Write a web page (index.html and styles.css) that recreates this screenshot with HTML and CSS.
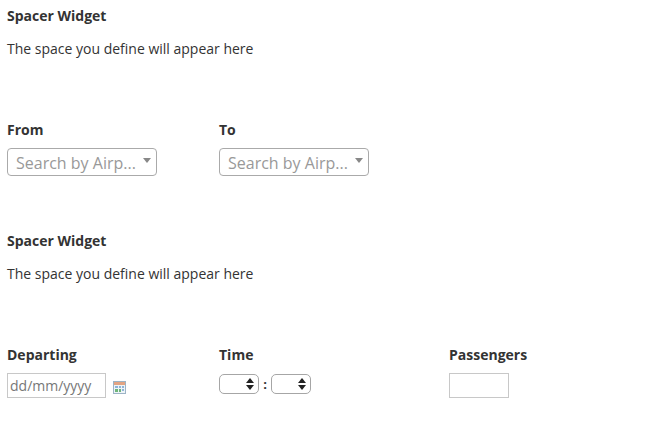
FILE: index.html
```html
<!DOCTYPE html>
<html lang="en">
<head>
    <meta charset="UTF-8">
    <title>Flight Search</title>
    <link rel="stylesheet" href="styles.css">
</head>
<body>
    <div class="spacer-widget">
        <div class="spacer-title">Spacer Widget</div>
        <div class="spacer-text">The space you define will appear here</div>
    </div>

    <div class="field-row">
        <div class="field col-first">
            <div class="field-label">From</div>
            <div class="airport-select">
                <span class="airport-text">Search by Airp...</span>
                <span class="caret"></span>
            </div>
        </div>
        <div class="field">
            <div class="field-label">To</div>
            <div class="airport-select">
                <span class="airport-text">Search by Airp...</span>
                <span class="caret"></span>
            </div>
        </div>
    </div>

    <div class="spacer-widget">
        <div class="spacer-title">Spacer Widget</div>
        <div class="spacer-text">The space you define will appear here</div>
    </div>

    <div class="field-row">
        <div class="field col-first">
            <div class="field-label">Departing</div>
            <div class="date-wrap">
                <div class="date-input">dd/mm/yyyy</div>
                <svg class="calendar" width="13" height="13" viewBox="0 0 13 13">
                    <rect x="0.5" y="0.5" width="12" height="12" fill="#eef4f8" stroke="#9db4c6"/>
                    <rect x="1" y="1" width="11" height="3" fill="#e3a483"/>
                    <rect x="2" y="5" width="3" height="2" fill="#8fb4d8"/>
                    <rect x="6" y="5" width="2" height="2" fill="#8fb4d8"/>
                    <rect x="9" y="5" width="2" height="2" fill="#8fb4d8"/>
                    <rect x="2" y="8" width="3" height="3" fill="#6fb57a"/>
                    <rect x="6" y="8" width="2" height="3" fill="#6fb57a"/>
                    <rect x="9" y="8" width="2" height="2" fill="#8fb4d8"/>
                </svg>
            </div>
        </div>
        <div class="field col-time">
            <div class="field-label">Time</div>
            <div class="time-wrap">
                <div class="time-select"><span class="updown"></span></div>
                <span class="time-sep">:</span>
                <div class="time-select"><span class="updown"></span></div>
            </div>
        </div>
        <div class="field">
            <div class="field-label">Passengers</div>
            <div class="pax-input"></div>
        </div>
    </div>
</body>
</html>
```

FILE: styles.css
```css
* {
    margin: 0;
    padding: 0;
    box-sizing: border-box;
    font-family: "Open Sans", Arial, sans-serif;
}

body {
    background-color: #fff;
    color: #333;
    font-size: 14px;
    padding: 8px 7px 0;
}

.spacer-widget {
    height: 113px;
}

.spacer-title {
    font-size: 14px;
    font-weight: bold;
    line-height: 16px;
}

.spacer-text {
    font-size: 14px;
    line-height: 20px;
    margin-top: 15px;
}

.field-row {
    display: flex;
    height: 112px;
}

.field-row:last-child {
    height: auto;
}

.field {
    display: flex;
    flex-direction: column;
}

.col-first {
    width: 212px;
}

.col-time {
    width: 230px;
}

.field-label {
    font-size: 14px;
    font-weight: bold;
    line-height: 18px;
    margin-bottom: 9px;
}

.airport-select {
    display: flex;
    align-items: center;
    justify-content: space-between;
    width: 150px;
    height: 28px;
    padding: 0 5px 0 8px;
    border: 1px solid #aaa;
    border-radius: 4px;
}

.airport-text {
    padding-top: 2px;
    font-size: 16px;
    color: #999;
}

.caret {
    border-left: 4px solid transparent;
    border-right: 4px solid transparent;
    border-top: 5px solid #888;
    margin-bottom: 3px;
}

.date-wrap {
    display: flex;
    align-items: center;
    gap: 7px;
}

.date-input {
    width: 99px;
    height: 25px;
    padding-left: 2px;
    border: 1px solid #c8c8c8;
    font-size: 14px;
    line-height: 23px;
    color: #777;
}

.calendar {
    margin-top: 4px;
}

.time-wrap {
    display: flex;
    align-items: center;
    height: 21px;
}

.time-select {
    display: flex;
    align-items: center;
    justify-content: flex-end;
    width: 40px;
    height: 20px;
    padding-right: 4px;
    border: 1px solid #a6a6a6;
    border-radius: 5px;
}

.updown {
    position: relative;
    width: 8px;
    height: 12px;
}

.updown:before,
.updown:after {
    content: "";
    position: absolute;
    left: 0;
    border-left: 4px solid transparent;
    border-right: 4px solid transparent;
}

.updown:before {
    top: 0;
    border-bottom: 5px solid #222;
}

.updown:after {
    bottom: 0;
    border-top: 5px solid #222;
}

.time-sep {
    width: 12px;
    text-align: center;
    font-size: 13px;
    font-weight: bold;
}

.pax-input {
    width: 60px;
    height: 25px;
    border: 1px solid #c8c8c8;
}
```
